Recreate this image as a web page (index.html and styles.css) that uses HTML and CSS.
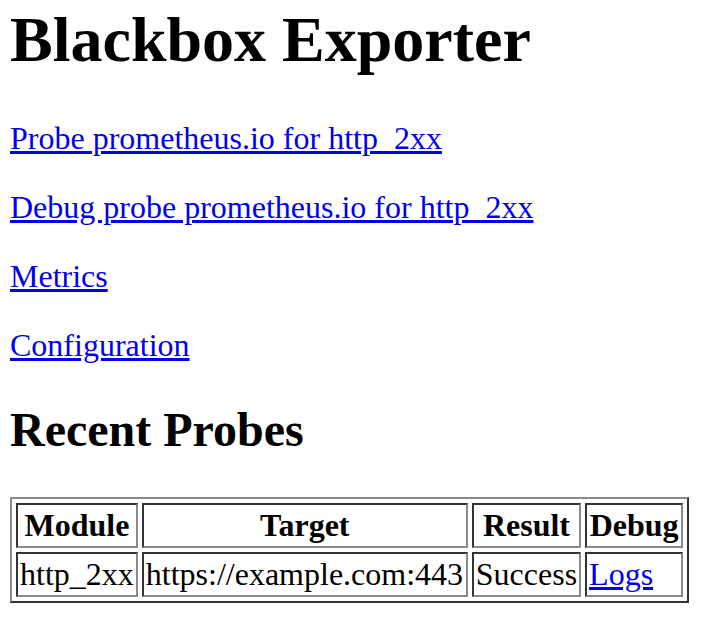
FILE: index.html
```html
<!DOCTYPE html>
<html>
<head>
<meta charset="utf-8">
<title>Blackbox Exporter</title>
<link rel="stylesheet" href="styles.css">
</head>
<body>
<h1 class="title">Blackbox Exporter</h1>
<p class="item"><a class="link" href="#">Probe prometheus.io for http_2xx</a></p>
<p class="item"><a class="link" href="#">Debug probe prometheus.io for http_2xx</a></p>
<p class="item"><a class="link" href="#">Metrics</a></p>
<p class="item"><a class="link" href="#">Configuration</a></p>
<h2 class="subtitle">Recent Probes</h2>
<table class="probes">
<tr><th class="cell">Module</th><th class="cell col-target">Target</th><th class="cell">Result</th><th class="cell col-debug">Debug</th></tr>
<tr><td class="cell">http_2xx</td><td class="cell">https://example.com:443</td><td class="cell">Success</td><td class="cell"><a class="link" href="#">Logs</a></td></tr>
</table>
</body>
</html>
```
FILE: styles.css
```css
html, body {
  background: #ffffff;
}
body {
  margin: 0;
  padding: 0 10px;
  font-family: "Liberation Serif", "Times New Roman", serif;
  font-size: 32px;
  color: #000;
}
.title {
  font-size: 64px;
  font-weight: bold;
  margin: 3px 0 42.88px;
}
.item {
  margin: 32px 0;
}
.link {
  color: #0000ee;
  text-decoration: underline;
}
.subtitle {
  font-size: 48px;
  font-weight: bold;
  margin: 38px 0 39.84px;
}
.probes {
  border-collapse: separate;
  border-spacing: 4px;
  border: 2px solid;
  border-color: #8a8a8a #333333 #333333 #8a8a8a;
}
.cell {
  padding: 2px;
  border: 2px solid;
  border-color: #333333 #8a8a8a #8a8a8a #333333;
  font-size: 32px;
}
.col-target {
  width: 318px;
}
.col-debug {
  width: 90px;
}
th.cell {
  font-weight: bold;
  text-align: center;
}
td.cell {
  text-align: left;
}
```
